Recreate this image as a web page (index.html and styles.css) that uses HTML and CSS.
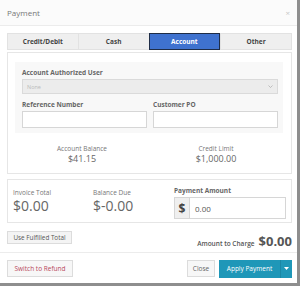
FILE: index.html
```html
<!DOCTYPE html>
<html>
<head>
<meta charset="utf-8">
<link rel="stylesheet" href="styles.css">
</head>
<body>
<div class="modal">
  <div class="header">
    <span class="title">Payment</span>
    <span class="close">×</span>
  </div>
  <div class="body">
    <div class="tabs">
      <div class="tab">Credit/Debit</div>
      <div class="tab">Cash</div>
      <div class="tab active">Account</div>
      <div class="tab">Other</div>
    </div>
    <div class="card acct">
      <div class="inner">
        <div class="label">Account Authorized User</div>
        <div class="select">None<span class="caret"><svg width="5" height="3" viewBox="0 0 5 3"><path d="M0.5 0.5L2.5 2.5L4.5 0.5" fill="none" stroke="#aaa" stroke-width="0.7"/></svg></span></div>
        <div class="row2">
          <div class="field">
            <div class="label">Reference Number</div>
            <div class="input"></div>
          </div>
          <div class="field">
            <div class="label">Customer PO</div>
            <div class="input"></div>
          </div>
        </div>
      </div>
      <div class="stats">
        <div class="stat"><div class="s-l">Account Balance</div><div class="s-v">$41.15</div></div>
        <div class="stat"><div class="s-l">Credit Limit</div><div class="s-v">$1,000.00</div></div>
      </div>
    </div>
    <div class="card totals">
      <div class="tot"><div class="t-l">Invoice Total</div><div class="t-v">$0.00</div></div>
      <div class="tot"><div class="t-l">Balance Due</div><div class="t-v">$-0.00</div></div>
      <div class="pay">
        <div class="p-l">Payment Amount</div>
        <div class="pgroup"><span class="addon">$</span><span class="pval">0.00</span></div>
      </div>
    </div>
    <div class="chargerow">
      <div class="btn small">Use Fulfilled Total</div>
      <div class="charge"><span class="c-l">Amount to Charge</span><span class="c-v">$0.00</span></div>
    </div>
  </div>
  <div class="footer">
    <div class="btn refund">Switch to Refund</div>
    <div class="right">
      <div class="btn closebtn">Close</div>
      <div class="apply"><span class="apply-main">Apply Payment</span><span class="apply-dd"><svg width="5" height="3" viewBox="0 0 5 3"><path d="M0 0h5L2.5 3z" fill="#fff"/></svg></span></div>
    </div>
  </div>
</div>
</body>
</html>
```
FILE: styles.css
```css
* { box-sizing: border-box; }
html, body { margin: 0; padding: 0; }
body {
  width: 300px; height: 286px; background: #8e8e8e;
  font-family: "Open Sans", "Liberation Sans", sans-serif;
  color: #555; overflow: hidden;
}
.modal {
  width: 297px; height: 283px; background: #fff;
  display: flex; flex-direction: column;
}
.header {
  height: 26px; display: flex; align-items: center; justify-content: space-between;
  padding: 0 7px 0 7px; border-bottom: 1px solid #ececec; background: #fbfbfb;
}
.title { font-size: 8px; color: #777; }
.close { font-size: 8px; color: #c8c8c8; }
.body { padding: 7px 5px 0 7px; flex: 1; }
.tabs { display: flex; height: 17px; }
.tab {
  flex: 1; background: #efefef; border: 1px solid #e2e2e2; border-right: none;
  font-size: 6.5px; font-weight: 700; color: #444;
  display: flex; align-items: center; justify-content: center;
}
.tab:last-child { border-right: 1px solid #e2e2e2; }
.tab.active { background: #3f72cf; color: #fff; border: 1px solid #1f2d47; }
.card { border: 1px solid #e6e6e6; background: #fff; }
.acct { margin-top: 2px; padding: 9px 8px 0 7px; height: 122px; }
.inner { background: #f8f8f8; padding: 6px 5px 5px 7px; }
.label { font-size: 6.5px; font-weight: 700; color: #666; height: 10px; line-height: 10px; }
.select {
  height: 15px; background: #ececec; border: 1px solid #dadada; margin-top: 1px;
  font-size: 5.5px; color: #bbb; padding: 0 4px; display: flex; align-items: center; justify-content: space-between;
}
.caret { display: flex; align-items: center; }
.row2 { display: flex; gap: 6px; margin-top: 6px; }
.field { flex: 1; }
.input { height: 17px; border: 1px solid #d6d6d6; background: #fff; margin-top: 1px; }
.stats { display: flex; padding-top: 11px; }
.stat { flex: 1; text-align: center; }
.s-l { font-size: 6.5px; color: #777; line-height: 9px; }
.s-v { font-size: 9px; color: #666; line-height: 12px; }
.totals { margin-top: 5px; height: 44px; display: flex; padding: 6px 5px 0 5px; }
.tot { width: 80px; }
.t-l { font-size: 6.5px; color: #777; line-height: 10px; margin-top: 2px; }
.t-v { font-size: 14px; color: #666; line-height: 16px; margin-top: 0; }
.pay { flex: 1; padding-left: 1px; }
.p-l { font-size: 6.5px; font-weight: 700; color: #666; line-height: 10px; }
.pgroup { display: flex; height: 22px; border: 1px solid #d6d6d6; margin-top: 1px; }
.addon { width: 15px; background: #efefef; border-right: 1px solid #d6d6d6; font-size: 12px; font-weight: 700; color: #444; display: flex; align-items: center; justify-content: center; }
.pval { font-size: 8px; color: #555; padding-left: 5px; display: flex; align-items: center; }
.chargerow { display: flex; justify-content: space-between; align-items: flex-start; margin-top: 8px; }
.btn { border: 1px solid #dcdcdc; background: #f4f4f4; display: flex; align-items: center; justify-content: center; }
.small { height: 13px; width: 65px; font-size: 6.3px; color: #555; }
.charge { display: flex; align-items: baseline; gap: 4px; margin-top: 1px; }
.c-l { font-size: 6.5px; color: #555; font-weight: 600; }
.c-v { font-size: 13px; font-weight: 700; color: #555; }
.footer {
  border-top: 1px solid #ececec; height: 31px; display: flex; align-items: center; justify-content: space-between;
  padding: 1px 5px 0 7px;
}
.refund { height: 17px; width: 66px; font-size: 6.5px; color: #b8485a; background: #f7f7f7; }
.right { display: flex; gap: 4px; align-items: center; }
.closebtn { height: 17px; width: 28px; font-size: 6.5px; color: #666; background: #f7f7f7; }
.apply { display: flex; height: 18px; background: #1f97b8; }
.apply-main { width: 62px; font-size: 6.5px; color: #fff; display: flex; align-items: center; justify-content: center; border-right: 1px solid #1a87a5; }
.apply-dd { width: 11px; display: flex; align-items: center; justify-content: center; }
```
